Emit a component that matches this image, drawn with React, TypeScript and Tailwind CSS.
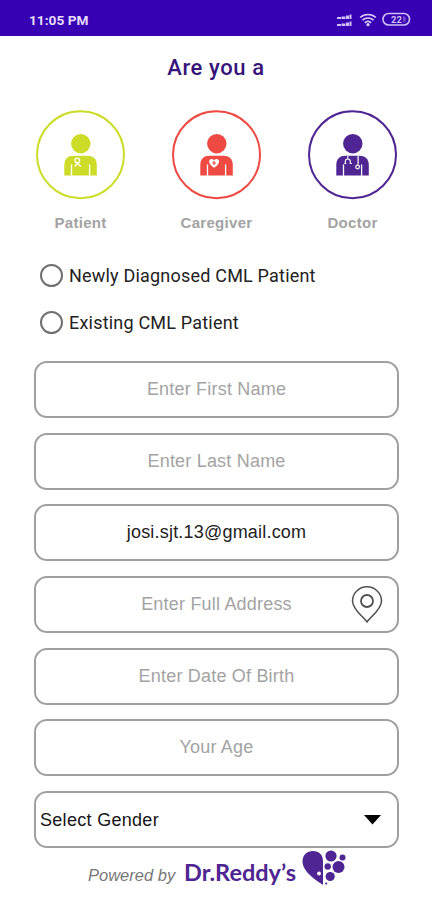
import type { ReactNode } from "react";

const StatusBar = () => (
  <header className="flex h-9 items-center justify-between bg-[#3700b3] pt-1 pr-[21px] pl-[29px] text-white">
    <span className="font-[Roboto] text-[13.7px] font-bold text-[#e6dcff]">11:05 PM</span>
    <svg width="75" height="16" viewBox="0 0 75 16" fill="none">
      <g fill="#cfc0f5">
        <path d="M1 5h4v2H1zM5.500 4.500h4V7h-4zM10 3.500h3V7h-3zM13.500 2.500h2V7h-2z" />
        <path d="M1 12h4v2H1zM5.500 11.500h4V14h-4zM10 10.500h3V14h-3zM13.500 9.500h2V14h-2z" />
      </g>
      <g stroke="#d9ccfa" strokeWidth="1.6">
        <path d="M24.200 5.500c4.400-4 11.200-4 15.600 0" />
        <path d="M26.500 8.200c3.200-2.900 7.800-2.900 11 0" />
        <path d="M28.800 10.800c2-1.700 4.400-1.700 6.400 0" />
      </g>
      <circle cx="32" cy="12.700" r="1.600" fill="#d9ccfa" />
      <rect x="47" y="1.500" width="26.500" height="11.500" rx="5.700" stroke="#cfc0f5" strokeWidth="1.6" />
      <path d="M67 4v6.500c4 0 4-6.500 0-6.500z" fill="#6c44cd" />
      <text x="60.500" y="10.700" fontSize="9.500" fontWeight="700" fontFamily="Roboto, sans-serif" textAnchor="middle" fill="#cfc0f5">
        22
      </text>
    </svg>
  </header>
);

const Person = ({ children }: { children: ReactNode }) => (
  <svg width="90" height="90" viewBox="0 0 90 90" fill="none">
    <circle cx="44.500" cy="44.800" r="43.500" stroke="currentColor" strokeWidth="2" />
    <circle cx="44.800" cy="33.700" r="9.700" fill="currentColor" />
    <g transform="translate(-0.700 0)">
      <path
        d="M29 65.500V55C29 49 32.500 45.700 38 45.700H52c5.500 0 9.500 3 9.500 9.300v10.500z"
        fill="currentColor"
      />
      <path d="M36.200 54.500v11.500M54.300 54.500v11.500" stroke="#fff" strokeWidth="1.3" />
      {children}
    </g>
  </svg>
);

const roles = [
  {
    name: "Patient",
    color: "text-[#cddc29]",
    mark: (
      <>
        <circle cx="42" cy="50.500" r="2.300" stroke="#fff" strokeWidth="1.3" />
        <path d="M43 52.500l-3.500 4M41 52.500l4.500 4" stroke="#fff" strokeWidth="1.3" />
      </>
    ),
  },
  {
    name: "Caregiver",
    color: "text-[#ee4a43]",
    mark: (
      <>
        <path
          d="M42.800 57.800c-3-2-5-4-5-6.200 0-3.200 3.700-3.500 5-1.200 1.300-2.300 5-2 5 1.200 0 2.200-2 4.200-5 6.200z"
          fill="#fff"
        />
        <path d="M42.800 51v4M40.800 53h4" stroke="currentColor" strokeWidth="1.2" />
      </>
    ),
  },
  {
    name: "Doctor",
    color: "text-[#4e2592]",
    mark: (
      <>
        <path
          d="M40.500 46v3M38 54v-2.500c0-3.300 5-3.300 5 0V54M37 53.500h2M42.500 53.500h2"
          stroke="#fff"
          strokeWidth="1.1"
        />
        <path d="M50.800 46v8.500" stroke="#fff" strokeWidth="1.2" />
        <circle cx="50.300" cy="57" r="1.800" stroke="#fff" strokeWidth="1.2" />
      </>
    ),
  },
];

const patientTypes = ["Newly Diagnosed CML Patient", "Existing CML Patient"];

const fields = [
  { label: "Enter First Name" },
  { label: "Enter Last Name" },
  { label: "josi.sjt.13@gmail.com", filled: true },
  { label: "Enter Full Address", pin: true },
  { label: "Enter Date Of Birth" },
  { label: "Your Age" },
];

const PinIcon = () => (
  <svg width="32" height="38" viewBox="0 0 32 38" fill="none" stroke="#505050" strokeWidth="1.5">
    <path d="M16 36C13.500 31.500 1.500 24 1.500 15a14.500 14.200 0 0 1 29 0C30.500 24 18.500 31.500 16 36z" />
    <circle cx="16" cy="15" r="6" strokeWidth="1.8" />
  </svg>
);

const HeartLogo = () => (
  <svg width="44" height="36" viewBox="0 0 44 36" fill="#4e2592">
    <path d="M21 35C14 30.500.5 21.500.5 11.500.5 5 5 1 11 1s10 4 10 10.500z" />
    <circle cx="17" cy="23.500" r="1.900" fill="#fff" />
    <circle cx="29" cy="6" r="5.600" />
    <circle cx="40.500" cy="7.500" r="3" />
    <circle cx="25.700" cy="16.500" r="3.200" />
    <circle cx="36.500" cy="17" r="6" />
    <circle cx="28.200" cy="26.500" r="4.600" />
    <circle cx="24.200" cy="33.500" r="1.100" />
  </svg>
);

const App = () => {
  return (
    <div className="h-[900px] w-[432px] overflow-hidden bg-white font-['Liberation_Sans',sans-serif]">
      <StatusBar />
      <h1 className="mt-[18px] text-center font-[Roboto] text-[22px] leading-7 font-medium tracking-[0.6px] text-[#36147a]">
        Are you a
      </h1>

      <div className="mt-7 ml-9 flex gap-[46px]">
        {roles.map((role) => (
          <div key={role.name} className="flex w-[90px] flex-col items-center">
            <div className={role.color}>
              <Person>{role.mark}</Person>
            </div>
            <span className="mt-[13px] -ml-px text-[15px] leading-5 font-bold tracking-[0.3px] text-[#a3a3a3]">
              {role.name}
            </span>
          </div>
        ))}
      </div>

      <div className="mt-[30px] ml-10 flex flex-col gap-[23px] font-[Roboto] text-lg text-[#222]">
        {patientTypes.map((type) => (
          <div key={type} className="flex h-6 items-center gap-1.5">
            <span className="size-[23px] rounded-full border-2 border-[#707070]" />
            <span className="pt-px tracking-[0.2px]">{type}</span>
          </div>
        ))}
      </div>

      <div className="mt-[27px] ml-[34px] flex w-[365px] flex-col gap-[14.7px] text-[18px]">
        {fields.map((field) => (
          <div
            key={field.label}
            className="relative flex h-[57px] items-center justify-center rounded-[13px] border-2 border-[#a0a0a0]"
          >
            <span className={field.filled ? "tracking-[0.2px] text-[#222]" : "tracking-[0.2px] text-[#a3a3a3]"}>
              {field.label}
            </span>
            {field.pin && (
              <span className="absolute top-2 right-[14px]">
                <PinIcon />
              </span>
            )}
          </div>
        ))}
        <div className="flex h-[57px] items-center justify-between rounded-[13px] border-2 border-[#a0a0a0] pr-4 pl-1">
          <span className="pt-px tracking-[0.3px] text-[#151515]">Select Gender</span>
          <svg width="17" height="10" viewBox="0 0 17 10">
            <path d="M0 0h17L8.500 9.500z" />
          </svg>
        </div>
      </div>

      <footer className="mt-[1.5px] ml-[88px] flex items-start">
        <span className="mt-[13px] w-[96px] text-[16.5px] leading-6 text-[#777] italic">Powered by</span>
        <span className="mt-2 w-[118px] font-[Lato] text-[23.5px] leading-7 font-bold text-[#4e2592]">
          Dr.Reddy’s
        </span>
        <HeartLogo />
      </footer>
    </div>
  );
};

export default App;
